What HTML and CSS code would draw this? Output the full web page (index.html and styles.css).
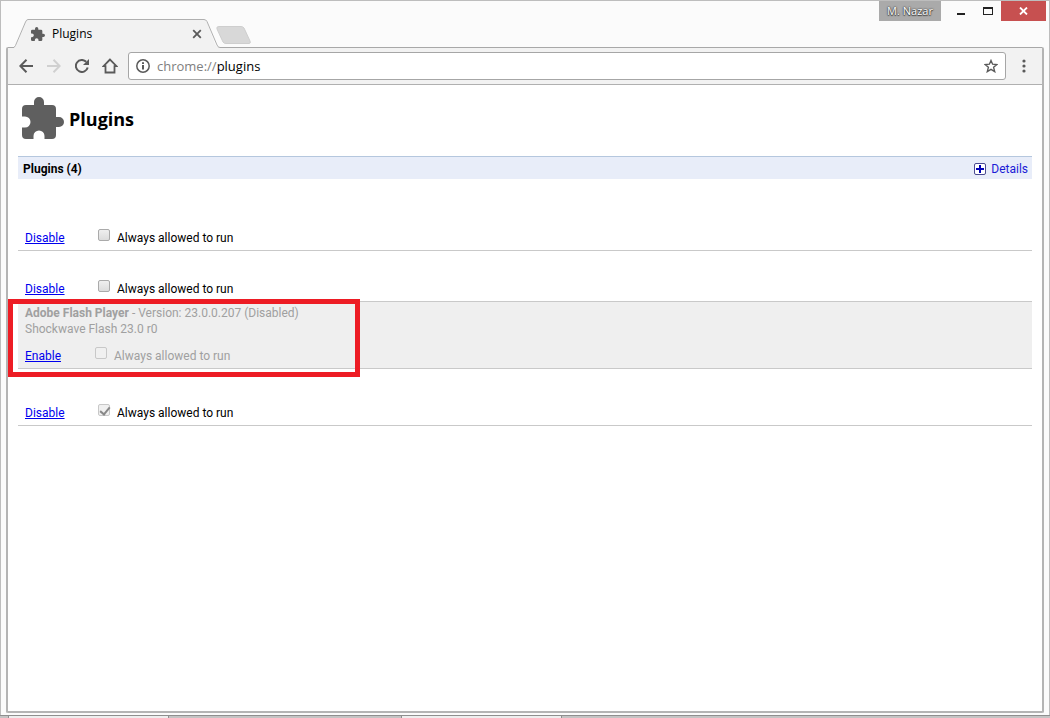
FILE: index.html
```html
<!DOCTYPE html>
<html lang="en">
<head>
<meta charset="utf-8">
<title>Plugins</title>
<link rel="stylesheet" href="styles.css">
</head>
<body>
<div class="window">
  <header class="titlebar">
    <div class="tab">
      <svg class="tab-shape" width="206" height="29" viewBox="0 0 206 29"><path d="M0 29V28.5H0Q2 27 3 25L12 3Q13 .5 15 .5H190Q192 .5 193 3L201 25Q202 28 205 28.500H206V29Z" fill="#f2f2f2"/><path d="M-1 28.500Q.5 28.500 1.500 26.500L11.500 3Q12.500 .5 14 .5H190Q192 .5 193 2.500L203 26Q204 28.500 206 28.500" fill="none" stroke="#b0b0b0"/></svg>
      <svg class="tab-icon" viewBox="0 0 42 42"><use href="#puzzle"/></svg>
      <span class="tab-title">Plugins</span>
      <button class="tab-close" aria-label="Close tab"><svg width="10" height="10" viewBox="0 0 10 10"><path d="M1.200 1.200L8.800 8.800M8.800 1.200L1.200 8.800" stroke="#5a5a5a" stroke-width="1.800"/></svg></button>
    </div>
    <button class="new-tab" aria-label="New tab"><svg width="36" height="18" viewBox="0 0 36 18"><path d="M3 .5H25Q27 .5 28 2L34 15Q35 17.500 33 17.500H10Q8 17.500 7 16L1 3Q0 .5 3 .5Z" fill="#d8d8d8" stroke="#cecece"/></svg></button>
    <div class="caption">
      <button class="user">M. Nazar</button>
      <button class="cap-btn" aria-label="Minimize"><svg width="8" height="10"><path d="M0 7H8V9H0Z" fill="#222"/></svg></button>
      <button class="cap-btn" aria-label="Maximize"><svg width="10" height="8"><path d="M0 0H10V8H0ZM1 2V7H9V2Z" fill="#222" fill-rule="evenodd"/></svg></button>
      <button class="cap-close" aria-label="Close"><svg width="9" height="8" viewBox="0 0 9 8"><path d="M1 .5L8 7.500M8 .5L1 7.500" stroke="#fff" stroke-width="1.800"/></svg></button>
    </div>
  </header>
  <div class="frame">
    <nav class="toolbar">
      <button class="tool" aria-label="Back"><svg width="14" height="14" viewBox="0 0 14 14"><path d="M14 7H1.500M7.500 .8L1.300 7L7.500 13.200" fill="none" stroke="#5a5a5a" stroke-width="2"/></svg></button>
      <button class="tool" aria-label="Forward" disabled><svg width="14" height="14" viewBox="0 0 14 14"><path d="M0 7H12.500M6.500 .8L12.700 7L6.500 13.200" fill="none" stroke="#d0d0d0" stroke-width="2"/></svg></button>
      <button class="tool" aria-label="Reload"><svg width="14" height="14" viewBox="0 0 14 14"><path d="M12.700 8.500A6 6 0 1 1 11.200 2.800" fill="none" stroke="#5a5a5a" stroke-width="2"/><path d="M14 0V6H8Z" fill="#5a5a5a"/></svg></button>
      <button class="tool" aria-label="Home"><svg width="16" height="16" viewBox="0 0 16 16"><path d="M8 1.500L1.500 8.200H3.500V14.500H12.500V8.200H14.500Z" fill="none" stroke="#5a5a5a" stroke-width="1.800"/></svg></button>
      <div class="omnibox">
        <button class="info" aria-label="Site information"><svg width="14" height="14" viewBox="0 0 14 14"><circle cx="7" cy="7" r="6.200" fill="none" stroke="#5a5a5a" stroke-width="1.500"/><path d="M6 6H8V10.500H6ZM6 3.300H8V5H6Z" fill="#5a5a5a"/></svg></button>
        <div class="url" role="textbox" aria-label="Address" contenteditable="true"><span class="scheme">chrome://</span>plugins</div>
        <button class="star" aria-label="Bookmark"><svg width="14" height="14" viewBox="0 0 14 14"><path d="M7 1.500L8.600 5.200L12.900 5.500L9.600 8.300L10.700 12.600L7 10.300L3.300 12.600L4.400 8.300L1.100 5.500L5.400 5.200Z" fill="none" stroke="#5a5a5a" stroke-width="1.400"/></svg></button>
      </div>
      <button class="menu" aria-label="Menu"><svg width="4" height="14" viewBox="0 0 4 14"><g fill="#5a5a5a"><circle cx="2" cy="2" r="1.600"/><circle cx="2" cy="7" r="1.600"/><circle cx="2" cy="12" r="1.600"/></g></svg></button>
    </nav>
    <main class="page">
      <div class="page-head">
        <svg class="logo" viewBox="0 0 42 42"><path id="puzzle" d="M12 8V5A5 5 0 0 1 22 5V8H30Q34 8 34 12V20H37A5 5 0 0 1 37 30H34V38Q34 42 30 42H22.500V39A5.500 5.500 0 0 0 11.500 39V42H4Q0 42 0 38V30.500H3A5.500 5.500 0 0 0 3 19.500H0V12Q0 8 4 8Z" fill="#5f5f5f"/></svg>
        <h1>Plugins</h1>
      </div>
      <div class="section-head">
        <h2>Plugins (4)</h2>
        <a class="details" href="#details"><svg width="12" height="12" viewBox="0 0 12 12"><rect x=".5" y=".5" width="11" height="11" rx="1.500" fill="#fff" stroke="#4a4a90"/><path d="M2 5H5V2H7V5H10V7H7V10H5V7H2Z" fill="#0000b8"/></svg>Details</a>
      </div>
      <ul class="plugins">
        <li class="plugin"><div class="actions"><a href="#disable1">Disable</a><label><input type="checkbox"><span>Always allowed to run</span></label></div></li>
        <li class="plugin"><div class="actions"><a href="#disable2">Disable</a><label><input type="checkbox"><span>Always allowed to run</span></label></div></li>
        <li class="plugin disabled">
          <p><b>Adobe Flash Player</b> - Version: 23.0.0.207 (Disabled)</p>
          <p>Shockwave Flash 23.0 r0</p>
          <div class="actions"><a href="#enable">Enable</a><label><input type="checkbox" disabled><span>Always allowed to run</span></label></div>
          <div class="highlight"></div>
        </li>
        <li class="plugin last"><div class="actions"><a href="#disable3">Disable</a><label><input type="checkbox" checked disabled><span>Always allowed to run</span></label></div></li>
      </ul>
    </main>
  </div>
</div>
<div class="below"><span class="below-a"></span><span class="below-b"></span></div>
</body>
</html>
```
FILE: styles.css
```css
* { box-sizing: border-box; }
body {
  margin: 0;
  min-height: 100vh;
  display: flex;
  flex-direction: column;
  font: 12px/16px "Open Sans", "Noto Sans", sans-serif;
  color: #000;
  background: #fff;
}
button { margin: 0; padding: 0; border: 0; background: none; font: inherit; color: inherit; }
svg { display: block; }
h1, h2, p, ul { margin: 0; padding: 0; }

.window {
  flex: 1;
  display: flex;
  flex-direction: column;
  padding: 0 5px 2px;
  border: 1px solid #bdbdbd;
  border-bottom: 0;
  background: #fbfbfb;
}
.titlebar { display: flex; height: 46px; padding-left: 8px; }
.tab {
  position: relative;
  z-index: 1;
  display: flex;
  align-items: center;
  width: 206px;
  height: 29px;
  margin-top: 18px;
  padding: 0 17px;
}
.tab-shape { position: absolute; left: 0; top: 0; }
.tab-icon, .tab-title, .tab-close { position: relative; }
.tab-icon { width: 14px; height: 14px; }
.tab-title { flex: 1; margin-left: 7px; }
.tab-close { padding: 1px; }
.new-tab { align-self: flex-start; margin: 25px 0 0 -4px; }
.caption { display: flex; height: 20px; margin-left: auto; margin-right: -2px; }
.user {
  width: 62px;
  background: #aaa;
  color: #fff;
  font-size: 11px;
  text-shadow: 0 0 2px #333, 0 0 1px #444, 0 1px 1px #444;
}
.cap-btn { display: flex; justify-content: center; align-items: center; width: 27px; }
.user + .cap-btn { width: 33px; padding: 0 0 0 7px; }
.cap-close { display: flex; justify-content: center; align-items: center; width: 45px; background: #c75050; }

.frame {
  flex: 1;
  display: flex;
  flex-direction: column;
  border: 1px solid #a8a8a8;
  border-width: 1px 2px 2px;
  border-color: #a8a8a8 #b4b4b4 #b4b4b4;
  border-radius: 2px;
  background: #fff;
}
.toolbar {
  display: flex;
  align-items: center;
  height: 37px;
  padding: 0 16px 0 4px;
  border-bottom: 1px solid #b0b0b0;
  background: #f2f2f2;
}
.tool { display: flex; justify-content: center; width: 28px; }
.omnibox {
  flex: 1;
  display: flex;
  align-items: center;
  height: 28px;
  margin: 0 16px 0 4px;
  padding: 0 7px;
  border: 1px solid #a6a6a6;
  border-radius: 3px;
  background: #fff;
}
.url { flex: 1; margin-left: 7px; font-size: 13px; line-height: 20px; outline: 0; }
.scheme { color: #808080; }

.page { padding: 12px 10px; }
.page-head { display: flex; align-items: center; gap: 5px; height: 42px; padding-left: 4px; }
.logo { width: 42px; height: 42px; }
h1 { padding-top: 2px; font-size: 18px; line-height: 24px; }
.section-head, .plugins { font-family: Roboto, "Open Sans", sans-serif; }
.section-head {
  display: flex;
  justify-content: space-between;
  align-items: center;
  height: 23px;
  margin-top: 17px;
  padding: 1px 4px 0 5px;
  border-top: 1px solid #b5c7de;
  background: #e8edf9;
}
h2 { font-size: 12px; line-height: 16px; }
.details { display: flex; align-items: center; gap: 5px; color: #1b1bd6; text-decoration: none; }

.plugins { padding-top: 20px; list-style: none; }
.plugin { position: relative; padding: 30px 7px 4px; border-bottom: 1px solid #c9c9c9; }
.plugin:first-child { padding-top: 31px; }
.plugin.last { padding-top: 36px; }
.actions { display: flex; align-items: center; height: 16px; }
.actions a { width: 73px; color: #0000ee; }
.actions label { display: flex; align-items: center; gap: 7px; }
.actions input {
  appearance: none;
  width: 12px;
  height: 12px;
  margin: 0 0 6px;
  border: 1px solid #aaa;
  border-radius: 2px;
  background: linear-gradient(#efefef, #dcdcdc);
}
.actions input:disabled { border-color: #c8c8c8; background: #f0f0f0; }
.actions input:checked::before {
  content: "";
  display: block;
  width: 8px;
  height: 4px;
  margin: 2px 1px;
  border: solid #888;
  border-width: 0 0 2px 2px;
  transform: rotate(-50deg);
}
.plugin.disabled { padding-top: 3px; background: #efefef; color: #a0a0a0; }
.disabled .actions { margin-top: 11px; }
.disabled .actions a { width: 70px; }
.highlight {
  position: absolute;
  left: -10px;
  top: -3px;
  width: 352px;
  height: 78px;
  border: 5px solid #ed1c24;
  pointer-events: none;
}

.below { display: flex; gap: 232px; height: 3px; padding-left: 8px; border-top: 1px solid #8f8f8f; background: #c4c4c4; }
.below span { width: 161px; border: solid #8f8f8f; border-width: 0 1px; background: #eee; }
```
